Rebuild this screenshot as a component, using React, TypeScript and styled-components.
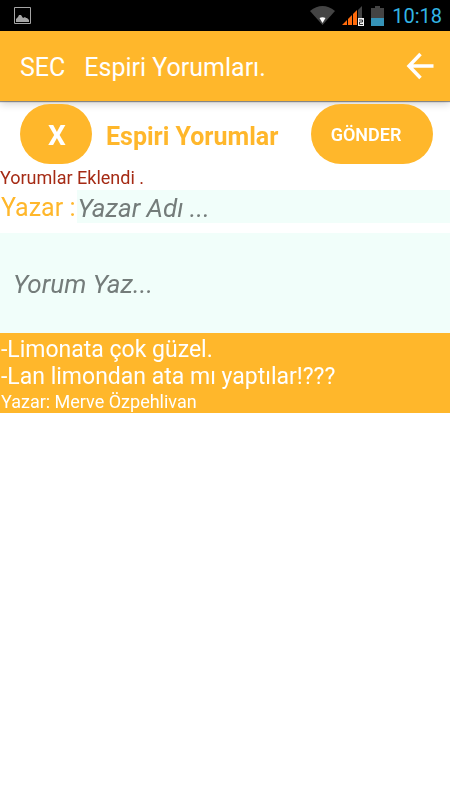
import React from "react";
import styled, { createGlobalStyle } from "styled-components";

const amber = "#ffb72b";
const mint = "#f1fefa";

const GlobalStyle = createGlobalStyle`
  * { box-sizing: border-box; }
  body {
    margin: 0;
    background: #fff;
    font-family: Roboto, "Noto Sans", sans-serif;
  }
  button, input, textarea { font-family: inherit; }
`;

const Screen = styled.div`
  display: flex;
  flex-direction: column;
  min-height: 100vh;
`;

const StatusBar = styled.div`
  display: flex;
  align-items: center;
  justify-content: space-between;
  height: 31px;
  padding: 0 8px 0 14px;
  background: #000;
  svg { display: block; }
`;

const StatusIcons = styled.div`
  display: flex;
  align-items: center;
  gap: 7px;
`;

const Clock = styled.time`
  padding: 1px 0 0 1px;
  color: #33b5e5;
  font-size: 20px;
  line-height: 30px;
`;

const AppBar = styled.header`
  display: flex;
  align-items: center;
  justify-content: space-between;
  height: 70px;
  padding: 0 16px 0 20px;
  background: ${amber};
  color: #fff;
  box-shadow: 0 1px 1px rgba(0, 0, 0, 0.4), 0 3px 8px rgba(0, 0, 0, 0.18);
`;

const BarTitle = styled.h1`
  display: flex;
  gap: 19px;
  margin: 0;
  padding-top: 3px;
  font-size: 25px;
  line-height: 32px;
  font-weight: 400;
`;

const BackButton = styled.button`
  padding: 0;
  border: 0;
  background: none;
  svg { display: block; }
`;

const Actions = styled.div`
  display: flex;
  align-items: center;
  justify-content: space-between;
  padding: 3px 17px 0 20px;
`;

const Heading = styled.div`
  display: flex;
  align-items: center;
  gap: 14px;
`;

const PillButton = styled.button<{ $size: "small" | "wide" }>`
  width: ${(p) => (p.$size === "small" ? 72 : 122)}px;
  height: 60px;
  padding: ${(p) => (p.$size === "small" ? "2px 0 0 2px" : "0 12px 0 0")};
  border: 0;
  border-radius: 30px;
  background: ${amber};
  color: #fff;
  font-size: ${(p) => (p.$size === "small" ? 28 : 18)}px;
  font-weight: ${(p) => (p.$size === "small" ? 700 : 600)};
`;

const Title = styled.h2`
  margin: 0;
  padding-top: 6px;
  color: ${amber};
  font-size: 25px;
  line-height: 30px;
  font-weight: 700;
`;

const Notice = styled.p`
  margin: 0;
  padding: 3px 0 1px;
  color: #a52a14;
  font-size: 18px;
  line-height: 22px;
`;

const AuthorRow = styled.div`
  display: flex;
  align-items: center;
  height: 33px;
`;

const AuthorLabel = styled.label`
  padding: 2px 2px 0 1px;
  color: ${amber};
  font-size: 25px;
  line-height: 33px;
`;

const AuthorInput = styled.input`
  flex: 1;
  min-width: 0;
  height: 33px;
  padding: 2px 0 0;
  border: 0;
  background: ${mint};
  color: #333;
  font-size: 26px;
  font-style: italic;
  &::placeholder { color: #747c7a; opacity: 1; }
`;

const CommentInput = styled.textarea`
  display: block;
  width: 100%;
  height: 100px;
  margin-top: 10px;
  padding: 35px 13px;
  border: 0;
  resize: none;
  background: ${mint};
  color: #333;
  font-size: 26px;
  line-height: 32px;
  font-style: italic;
  &::placeholder { color: #747c7a; opacity: 1; }
`;

const Comment = styled.article`
  padding: 3px 0 0 1px;
  background: ${amber};
  color: #fff;
`;

const CommentText = styled.p`
  margin: 0;
  font-size: 23px;
  line-height: 27px;
`;

const CommentAuthor = styled.p`
  margin: 0;
  font-size: 18px;
  line-height: 23px;
`;

const PictureIcon = () => (
  <svg width="17" height="17" viewBox="0 0 17 17" aria-hidden="true">
    <path d="M.5.5h16v16H.5z" fill="none" stroke="#a5a5a5" />
    <path d="M2 15v-3l2-2 1-2h2l2 3 2-1 1 1h1l2 2v2z" fill="#a5a5a5" />
  </svg>
);

const WifiIcon = () => (
  <svg width="25" height="20" viewBox="0 0 25 20" aria-hidden="true">
    <path d="M0 5Q12.500-5 25 5L12.500 19z" fill="#444" />
    <path d="M9.500 12q3-1.500 6 0L12.500 17z" fill="#fff" />
  </svg>
);

const SignalIcon = () => (
  <svg width="22" height="20" viewBox="0 0 22 20" aria-hidden="true">
    <path d="M16 19V4l4-4v19z" fill="#444" />
    <path d="M0 19l5-5v5zM6 19v-6l4-4v10zM11 19V8l4-4v15z" fill="#ff6b0c" />
    <path d="M16 12h6v8h-6z" fill="#f4f4f4" />
    <path d="M17 14h3.500v2H17.500v2.500H21" fill="none" stroke="#333" />
  </svg>
);

const BatteryIcon = () => (
  <svg width="13" height="20" viewBox="0 0 13 20" aria-hidden="true">
    <path d="M0 2h4V0h5v2h4v10H0z" fill="#444" />
    <path d="M0 12h13v8H0z" fill="#3593b8" />
  </svg>
);

const BackIcon = () => (
  <svg width="28" height="28" viewBox="0 0 28 28" aria-hidden="true">
    <path d="M27.500 14H3M14.500 2L3 14l11.500 12" fill="none" stroke="#fff" strokeWidth="3.500" />
  </svg>
);

export default function App() {
  return (
    <Screen>
      <GlobalStyle />
      <StatusBar>
        <PictureIcon />
        <StatusIcons>
          <WifiIcon />
          <SignalIcon />
          <BatteryIcon />
          <Clock>10:18</Clock>
        </StatusIcons>
      </StatusBar>
      <AppBar>
        <BarTitle>
          <span>SEC</span>
          <span>Espiri Yorumları.</span>
        </BarTitle>
        <BackButton type="button" aria-label="Geri">
          <BackIcon />
        </BackButton>
      </AppBar>
      <main>
        <Actions>
          <Heading>
            <PillButton type="button" $size="small">X</PillButton>
            <Title>Espiri Yorumlar</Title>
          </Heading>
          <PillButton type="button" $size="wide">GÖNDER</PillButton>
        </Actions>
        <Notice>Yorumlar Eklendi .</Notice>
        <AuthorRow>
          <AuthorLabel htmlFor="author">Yazar :</AuthorLabel>
          <AuthorInput id="author" placeholder="Yazar Adı ..." />
        </AuthorRow>
        <CommentInput aria-label="Yorum" placeholder="Yorum Yaz..." />
        <Comment>
          <CommentText>
            -Limonata çok güzel.
            <br />
            -Lan limondan ata mı yaptılar!???
          </CommentText>
          <CommentAuthor>Yazar: Merve Özpehlivan</CommentAuthor>
        </Comment>
      </main>
    </Screen>
  );
}
